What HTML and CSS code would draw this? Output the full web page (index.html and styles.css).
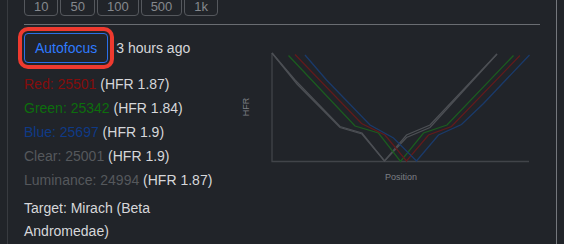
FILE: index.html
```html
<!DOCTYPE html>
<html lang="en">
  <head>
    <meta charset="UTF-8" />
    <meta name="viewport" content="width=device-width, initial-scale=1.0" />
    <title>Autofocus</title>
    <link rel="stylesheet" href="styles.css">
  </head>
  <body>
    <div class="panel">
      <div class="steps">
        <button>10</button>
        <button>50</button>
        <button>100</button>
        <button>500</button>
        <button>1k</button>
      </div>
      <div class="divider"></div>
      <div class="af-row">
        <div class="af-info">
          <div class="af-head">
            <button class="af-btn">Autofocus</button>
            <span class="af-time">3 hours ago</span>
          </div>
          <div class="stats">
            <div><span class="c-red">Red: 25501</span> (HFR 1.87)</div>
            <div><span class="c-green">Green: 25342</span> (HFR 1.84)</div>
            <div><span class="c-blue">Blue: 25697</span> (HFR 1.9)</div>
            <div><span class="c-clear">Clear: 25001</span> (HFR 1.9)</div>
            <div><span class="c-clear">Luminance: 24994</span> (HFR 1.87)</div>
          </div>
          <div class="target">Target: Mirach (Beta Andromedae)</div>
        </div>
        <svg class="chart" width="304" height="150" viewBox="236 40 304 150">
          <text class="axis-label" transform="translate(249 107) rotate(-90)" text-anchor="middle">HFR</text>
          <text class="axis-label" x="401" y="180" text-anchor="middle">Position</text>
          <polyline class="axis" points="272,53 272,161.5 529,161.5" />
          <polyline class="l-gray" points="272,53 295,80 340,126.5 362,133 384.5,161 406.5,135 430,125 497,54" />
          <polyline class="l-gray" points="272,53 297,84 340,127.5 362,134 384.5,161 406.5,137.5 430,127.5 497,54" />
          <polyline class="l-green" points="288.5,55.5 355,126 378.5,133 400.5,161.5 423.5,133 447,125 513.5,55.5" />
          <polyline class="l-red" points="295,54.5 361.5,123.5 385,135 406.5,161 428.5,135 451.5,126.5 520,55.5" />
          <polyline class="l-blue" points="305,55 326.5,80 370,125 393.5,138 416.5,161 438.5,135 461.5,124.5 483.5,103.5 529.5,55" />
        </svg>
      </div>
    </div>
  </body>
</html>
```

FILE: styles.css
```css
body {
  margin: 0;
  background-color: #212429;
  font-family: "Liberation Sans", Arial, sans-serif;
  color: #d6d7da;
  overflow: hidden;
}
.panel {
  width: 550px;
  min-height: 260px;
  margin: -4px 0 0 7px;
  padding: 0 16px;
  box-sizing: border-box;
  border-left: 1px solid #383b40;
  border-right: 1px solid #74777c;
}
.steps {
  display: flex;
  gap: 2px;
}
.steps button {
  height: 20px;
  padding: 0 9px;
  background: transparent;
  border: 1px solid #55585d;
  border-radius: 4px;
  color: #85888d;
  font-family: inherit;
  font-size: 13px;
}
.divider {
  margin-top: 8px;
  border-top: 1px solid #6a6d72;
}
.af-row {
  display: flex;
}
.af-info {
  width: 212px;
  font-size: 14px;
}
.af-head {
  display: flex;
  align-items: center;
  gap: 8px;
  margin-top: 8px;
}
.af-btn {
  height: 30px;
  padding: 0 10px;
  background: transparent;
  border: 1px solid #2a6fe8;
  border-radius: 4px;
  color: #2f7bff;
  font-family: inherit;
  font-size: 14px;
  outline: 4px solid #ee3a2f;
  outline-offset: 2px;
}
.af-time {
  font-size: 14px;
}
.stats {
  margin-top: 9px;
  line-height: 24px;
}
.c-red {
  color: #850c0c;
}
.c-green {
  color: #0d6e0d;
}
.c-blue {
  color: #0f3a86;
}
.c-clear {
  color: #55585c;
}
.target {
  margin-top: 5px;
  line-height: 23px;
}
.chart {
  margin-top: 15px;
  flex: none;
}
.axis-label {
  font-family: "Liberation Sans", Arial, sans-serif;
  font-size: 9px;
  fill: #7c7f84;
}
.axis {
  fill: none;
  stroke: #414449;
  stroke-width: 1.3;
}
.chart polyline {
  fill: none;
  stroke-width: 1.3;
}
.l-gray {
  stroke: #4c4f54;
}
.l-green {
  stroke: #1b5c1f;
}
.l-red {
  stroke: #621a1c;
}
.l-blue {
  stroke: #1a3a6a;
}
```
